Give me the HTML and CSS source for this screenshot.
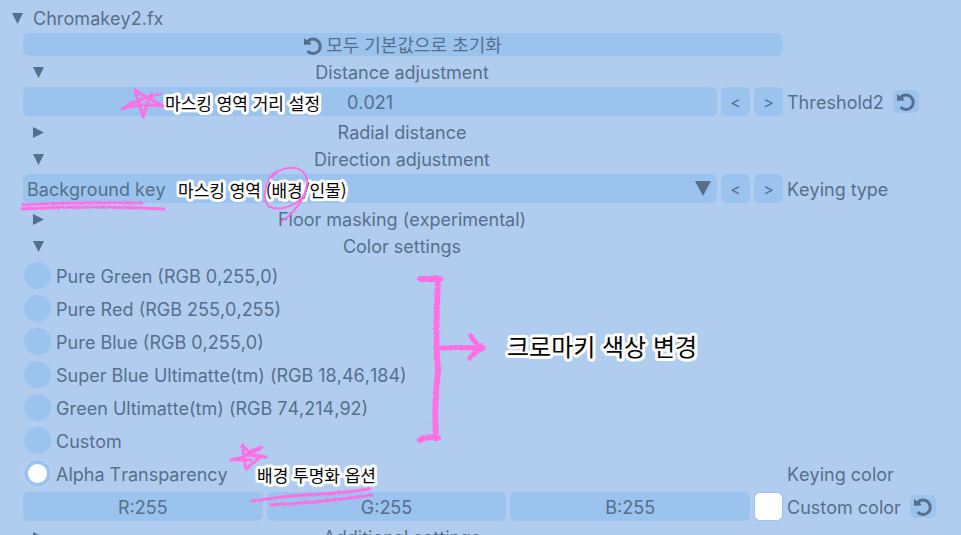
FILE: index.html
```
<!DOCTYPE html>
<html lang="ko">
<head>
    <meta charset="UTF-8">
    <meta name="viewport" content="width=device-width, initial-scale=1.0">
    <title>Chromakey2.fx</title>
    <link rel="stylesheet" href="styles.css">
</head>
<body>

<svg width="0" height="0" class="defs" aria-hidden="true">
    <symbol id="undo" viewBox="0 0 18 18">
        <path d="M3.6 4.6 A7.2 7.2 0 1 1 3.6 14" fill="none" stroke="currentColor" stroke-width="3"/>
        <path d="M0 1 L2.4 3 L5 2.4 L7.4 7.6 L0 7.8 Z" fill="currentColor"/>
    </symbol>
</svg>

<div class="panel">
    <button class="title"><span class="arrow down"></span>Chromakey2.fx</button>

    <div class="row">
        <button class="box reset-all">
            <svg class="undo"><use href="#undo"/></svg>
            모두 기본값으로 초기화
        </button>
    </div>

    <button class="node"><span class="arrow down"></span>Distance adjustment</button>

    <div class="row">
        <div class="fields">
            <input class="box value" id="threshold" type="text" value="0.021">
            <button class="box step">&lt;</button>
            <button class="box step">&gt;</button>
        </div>
        <div class="side">
            <label for="threshold">Threshold2</label>
            <button class="box reset" aria-label="Reset"><svg class="undo"><use href="#undo"/></svg></button>
        </div>
    </div>

    <button class="node"><span class="arrow right"></span>Radial distance</button>
    <button class="node"><span class="arrow down"></span>Direction adjustment</button>

    <div class="row">
        <div class="fields">
            <div class="combo">
                <select class="box" id="keying-type">
                    <option>Background key</option>
                </select>
                <span class="arrow down"></span>
            </div>
            <button class="box step">&lt;</button>
            <button class="box step">&gt;</button>
        </div>
        <div class="side">
            <label for="keying-type">Keying type</label>
        </div>
    </div>

    <button class="node"><span class="arrow right"></span>Floor masking (experimental)</button>
    <button class="node"><span class="arrow down"></span>Color settings</button>

    <div class="row">
        <div class="radios" role="radiogroup" aria-labelledby="keying-color">
            <label><input type="radio" name="color"><span>Pure Green (RGB 0,255,0)</span></label>
            <label><input type="radio" name="color"><span>Pure Red (RGB 255,0,255)</span></label>
            <label><input type="radio" name="color"><span>Pure Blue (RGB 0,255,0)</span></label>
            <label><input type="radio" name="color"><span>Super Blue Ultimatte(tm) (RGB 18,46,184)</span></label>
            <label><input type="radio" name="color"><span>Green Ultimatte(tm) (RGB 74,214,92)</span></label>
            <label><input type="radio" name="color"><span>Custom</span></label>
            <label><input type="radio" name="color" checked><span>Alpha Transparency</span></label>
        </div>
        <div class="side bottom"><span id="keying-color">Keying color</span></div>
    </div>

    <div class="row">
        <div class="fields">
            <input class="box value" type="text" value="R:255" aria-label="Red">
            <input class="box value" type="text" value="G:255" aria-label="Green">
            <input class="box value" type="text" value="B:255" aria-label="Blue">
            <input class="swatch" id="custom-color" type="color" value="#ffffff">
        </div>
        <div class="side">
            <label for="custom-color">Custom color</label>
            <button class="box reset" aria-label="Reset"><svg class="undo"><use href="#undo"/></svg></button>
        </div>
    </div>

    <button class="node"><span class="arrow right"></span>Additional settings</button>

    <!-- hand-drawn notes over the panel -->
    <svg class="notes" width="961" height="535" viewBox="0 0 961 535">
        <filter id="rough" filterUnits="userSpaceOnUse" x="0" y="0" width="961" height="535">
            <feTurbulence type="fractalNoise" baseFrequency="0.6" numOctaves="1"/>
            <feDisplacementMap in="SourceGraphic" scale="3" xChannelSelector="R" yChannelSelector="G"/>
        </filter>
        <text class="note" x="165" y="110">마스킹 영역 거리 설정</text>
        <text class="note" x="178" y="197">마스킹 영역 (배경/인물)</text>
        <text class="note large" x="507" y="356">크로마키 색상 변경</text>
        <text class="note" x="257" y="482">배경 투명화 옵션</text>
        <g class="ink" filter="url(#rough)">
            <path d="M160 94 Q139 98 122 109 Q140 103 163 106 Q148 98 135 90 L143 117 L151 94"/>
            <path d="M251 460 L231 460 Q249 457 262 447 L249 452 L242 445 L246 469 L260 457 L245 454 Q257 456 266 457"/>
            <path d="M23 205 Q75 202 142 203 M22 209 Q90 205 164 209"/>
            <path d="M252 501 L290 496 Q333 494 370 489 M271 505 Q325 502 372 495"/>
            <path class="thick" d="M420 279 L440 279 M438 279 Q435 340 438 370 Q434 405 436 438 M438 438 Q427 436 420 440"/>
            <path class="arrow-line" d="M439 348 Q460 347 480 348 M471 336 Q474 343 483 348 Q474 352 470 358"/>
        </g>
        <path class="ink" d="M277 171 C264 179 261 202 270 207 C282 212 304 203 306 189 C310 174 301 166 288 168 C280 169 277 172 272 177 M304 196 Q295 213 282 221"/>
    </svg>
</div>

</body>
</html>
```
FILE: styles.css
```
* {
    box-sizing: border-box;
}
body {
    margin: 0;
    background-color: #b0cdf0;
    color: #566f8c;
    font-family: Inter, "Noto Sans CJK KR", sans-serif;
    font-size: 18px;
    font-kerning: none;
    font-optical-sizing: none;
    line-height: 23px;
}
button,
input,
select {
    margin: 0;
    padding: 2px 0 0;
    border: none;
    background: none;
    color: inherit;
    font: inherit;
    font-kerning: none;
    font-optical-sizing: none;
}
.defs {
    position: absolute;
}
.panel {
    position: relative;
    display: flex;
    flex-direction: column;
    gap: 4px;
    height: 100vh;
    padding: 6px 0 0 23px;
    overflow: hidden;
}
.panel > * {
    flex-shrink: 0;
}
.row {
    display: grid;
    grid-template-columns: minmax(0, 1fr) 174px;
    gap: 4px;
}
.box {
    border-radius: 6px;
    background-color: #9ac3ee;
}

/* tree headings */
.title,
.node {
    display: flex;
    align-items: center;
    height: 23px;
}
.title {
    gap: 10px;
    margin-left: -11px;
}
.node {
    position: relative;
    justify-content: center;
    margin-right: 180px;
}
.node .arrow {
    position: absolute;
    left: 10px;
}
.arrow {
    width: 11px;
    height: 11px;
    background-color: #566f8c;
}
.arrow.down {
    clip-path: polygon(0 0, 100% 0, 50% 100%);
}
.arrow.right {
    clip-path: polygon(0 0, 100% 50%, 0 100%);
}

/* controls */
.reset-all {
    display: flex;
    justify-content: center;
    align-items: center;
    gap: 4px;
    height: 23px;
}
.undo {
    width: 18px;
    height: 18px;
}
.fields {
    display: flex;
    gap: 4px;
    height: 29px;
}
.value {
    flex: 1;
    min-width: 0;
    text-align: center;
}
.step {
    flex: none;
    width: 29px;
    font-size: 16px;
}
.combo {
    position: relative;
    flex: 1;
}
.combo select {
    width: 100%;
    height: 29px;
    padding-left: 4px;
    appearance: none;
}
.combo .arrow {
    position: absolute;
    top: 7px;
    right: 6px;
    width: 16px;
    height: 15px;
    pointer-events: none;
}
.side {
    display: flex;
    align-items: center;
    gap: 9px;
}
.side label,
.radios span {
    padding-top: 2px;
}
.side.bottom {
    align-items: flex-end;
    padding-bottom: 2px;
}
.reset {
    display: flex;
    justify-content: center;
    align-items: center;
    width: 26px;
    height: 23px;
    padding: 0;
}
.radios {
    display: flex;
    flex-direction: column;
    align-items: flex-start;
    gap: 4px;
}
.radios label {
    display: flex;
    align-items: center;
    gap: 4px;
    height: 29px;
}
.radios input {
    width: 29px;
    height: 29px;
    border: 1px solid #b0cdf0;
    border-radius: 50%;
    background-color: #9ac3ee;
    appearance: none;
}
.radios input:checked {
    background-color: #fff;
    box-shadow: inset 0 0 0 4px #9ac3ee;
}
.swatch {
    flex: none;
    width: 29px;
    height: 29px;
    padding: 0;
    border: 1px solid #9ac3ee;
    border-radius: 6px;
    background-color: #fff;
    appearance: none;
    overflow: hidden;
}
.swatch::-webkit-color-swatch-wrapper {
    padding: 0;
}
.swatch::-webkit-color-swatch {
    border: none;
}

/* notes */
.notes {
    position: absolute;
    top: 0;
    left: 0;
    pointer-events: none;
}
.ink {
    fill: none;
    stroke: #ff70e4;
    stroke-width: 2;
    stroke-linecap: round;
    stroke-linejoin: round;
}
g.ink {
    stroke-width: 3;
}
.ink .thick {
    stroke-width: 6;
}
.ink .arrow-line {
    stroke-width: 5;
}
.note {
    fill: #000;
    stroke: #fff;
    stroke-width: 6;
    stroke-linejoin: round;
    paint-order: stroke;
    font-family: "Noto Sans CJK KR", sans-serif;
    font-size: 17px;
}
.note.large {
    font-size: 24px;
}
```
